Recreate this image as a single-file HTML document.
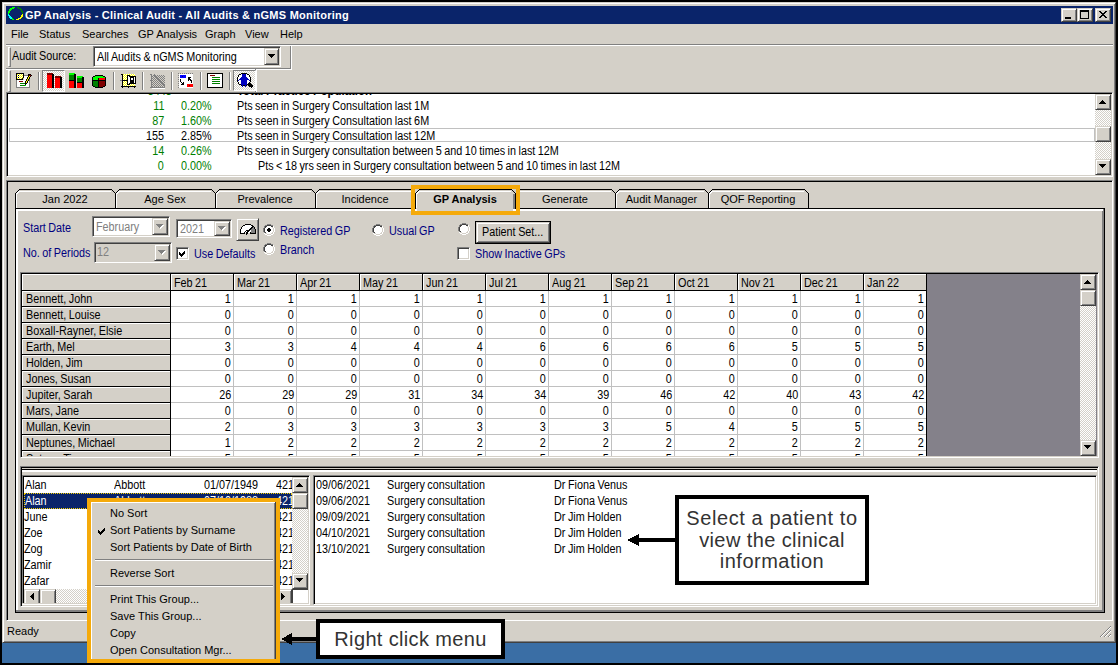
<!DOCTYPE html><html><head><meta charset="utf-8"><style>
html,body{margin:0;padding:0}
body{width:1118px;height:665px;background:#000;position:relative;overflow:hidden}
.a{position:absolute;box-sizing:border-box}
.t{position:absolute;font:12px/14px "Liberation Sans",sans-serif;white-space:pre;color:#000;word-spacing:-0.55px;transform:scaleX(0.9);transform-origin:0 0}
.r{transform-origin:100% 0}
.s{position:absolute;font:11px/13px "Liberation Sans",sans-serif;white-space:pre;color:#000}
.raised{border:1px solid;border-color:#d4d0c8 #404040 #404040 #d4d0c8;box-shadow:inset 1px 1px #fff,inset -1px -1px #808080;background:#d4d0c8}
.sunken{border:1px solid;border-color:#808080 #fff #fff #808080;box-shadow:inset 1px 1px #404040,inset -1px -1px #d4d0c8}
.sk{box-shadow:inset 1px 1px #000,inset -1px -1px #d4d0c8}
.navy{color:#000080}
.grn{color:#008000}
svg{shape-rendering:crispEdges;overflow:visible}
</style></head><body>
<div class="a" style="left:2px;top:643px;width:1114px;height:20px;background:#3a6ea5"></div>
<div class="a" style="left:2px;top:2px;width:1114px;height:641px;background:#d4d0c8;border:1px solid;border-color:#d4d0c8 #404040 #404040 #d4d0c8;box-shadow:inset 1px 1px #fff,inset -1px -1px #808080"></div>
<div class="a" style="left:6px;top:6px;width:1107px;height:18px;background:#0a246a"></div>
<svg class="a" style="left:8px;top:7px" width="16" height="14"><rect x="4" y="0" width="3" height="1" fill="#00ff00"/><rect x="9" y="0" width="2" height="1" fill="#008000"/><rect x="2" y="1" width="4" height="1" fill="#00ff00"/><rect x="10" y="1" width="3" height="1" fill="#008000"/><rect x="1" y="2" width="3" height="1" fill="#00ff00"/><rect x="12" y="2" width="2" height="1" fill="#008000"/><rect x="1" y="3" width="2" height="1" fill="#00ff00"/><rect x="13" y="3" width="1" height="1" fill="#008000"/><rect x="0" y="4" width="2" height="1" fill="#00ff00"/><rect x="13" y="4" width="2" height="1" fill="#008000"/><rect x="0" y="5" width="2" height="1" fill="#00ff00"/><rect x="14" y="5" width="1" height="1" fill="#008000"/><rect x="0" y="6" width="1" height="1" fill="#00ff00"/><rect x="14" y="6" width="1" height="1" fill="#008000"/><rect x="0" y="7" width="1" height="1" fill="#00ffff"/><rect x="14" y="7" width="1" height="1" fill="#ffff00"/><rect x="0" y="8" width="2" height="1" fill="#00ffff"/><rect x="13" y="8" width="2" height="1" fill="#ffff00"/><rect x="1" y="9" width="2" height="1" fill="#00ffff"/><rect x="13" y="9" width="2" height="1" fill="#ffff00"/><rect x="1" y="10" width="3" height="1" fill="#00ffff"/><rect x="12" y="10" width="2" height="1" fill="#ffff00"/><rect x="2" y="11" width="2" height="1" fill="#00ffff"/><rect x="4" y="11" width="1" height="1" fill="#00ff00"/><rect x="10" y="11" width="3" height="1" fill="#ffff00"/><rect x="4" y="12" width="2" height="1" fill="#00ff00"/><rect x="8" y="12" width="3" height="1" fill="#ffff00"/></svg>
<div class="s" style="left:25px;top:9px;color:#fff;font-weight:bold;letter-spacing:0.25px">GP Analysis - Clinical Audit - All Audits &amp; nGMS Monitoring</div>
<div class="a raised" style="left:1061px;top:8px;width:16px;height:14px;"></div>
<div class="a raised" style="left:1077px;top:8px;width:16px;height:14px;"></div>
<div class="a raised" style="left:1095px;top:8px;width:16px;height:14px;"></div>
<svg class="a" style="left:1061px;top:8px" width="16" height="14"><rect x="4" y="9" width="6" height="2" fill="#000"/></svg>
<svg class="a" style="left:1077px;top:8px" width="16" height="14"><path d="M3 2h9v9h-9z M4 4v6h7v-6z" fill="#000" fill-rule="evenodd"/></svg>
<svg class="a" style="left:1099px;top:11px" width="8" height="7"><rect x="0" y="0" width="2" height="1" fill="#000"/><rect x="6" y="0" width="2" height="1" fill="#000"/><rect x="1" y="1" width="2" height="1" fill="#000"/><rect x="5" y="1" width="2" height="1" fill="#000"/><rect x="2" y="2" width="4" height="1" fill="#000"/><rect x="3" y="3" width="2" height="1" fill="#000"/><rect x="2" y="4" width="4" height="1" fill="#000"/><rect x="1" y="5" width="2" height="1" fill="#000"/><rect x="5" y="5" width="2" height="1" fill="#000"/><rect x="0" y="6" width="2" height="1" fill="#000"/><rect x="6" y="6" width="2" height="1" fill="#000"/></svg>
<div class="s" style="left:11px;top:28px;">File</div>
<div class="s" style="left:39px;top:28px;">Status</div>
<div class="s" style="left:82px;top:28px;">Searches</div>
<div class="s" style="left:138px;top:28px;">GP Analysis</div>
<div class="s" style="left:205px;top:28px;">Graph</div>
<div class="s" style="left:245px;top:28px;">View</div>
<div class="s" style="left:280px;top:28px;">Help</div>
<div class="a" style="left:6px;top:44px;width:1107px;height:1px;background:#808080"></div>
<div class="a" style="left:6px;top:45px;width:1107px;height:1px;background:#fff"></div>
<div class="a" style="left:8px;top:47px;width:3px;height:20px;border:1px solid;border-color:#fff #808080 #808080 #fff"></div>
<div class="t" style="left:12px;top:49px;">Audit Source:</div>
<div class="a sunken " style="left:93px;top:46px;width:188px;height:21px;background:#fff;"></div>
<div class="t" style="left:97px;top:50px;">All Audits &amp; nGMS Monitoring</div>
<div class="a raised" style="left:264px;top:48px;width:15px;height:17px;"></div>
<svg class="a" style="left:268px;top:54px" width="7" height="4"><path d="M0 0H7V1H6V2H5V3H4V4H3V3H2V2H1V1H0Z" fill="#000"/></svg>
<div class="a" style="left:290px;top:46px;width:1px;height:23px;background:#808080"></div>
<div class="a" style="left:291px;top:46px;width:1px;height:24px;background:#fff"></div>
<div class="a" style="left:6px;top:68px;width:285px;height:1px;background:#808080"></div>
<div class="a" style="left:6px;top:69px;width:286px;height:1px;background:#fff"></div>
<div class="a" style="left:8px;top:70px;width:3px;height:22px;border:1px solid;border-color:#fff #808080 #808080 #fff"></div>
<div class="a" style="left:256px;top:69px;width:1px;height:23px;background:#fff"></div>
<div class="a" style="left:255px;top:69px;width:1px;height:23px;background:#808080"></div>
<div class="a" style="left:38px;top:72px;width:1px;height:18px;background:#808080"></div>
<div class="a" style="left:39px;top:72px;width:1px;height:18px;background:#fff"></div>
<div class="a" style="left:113px;top:72px;width:1px;height:18px;background:#808080"></div>
<div class="a" style="left:114px;top:72px;width:1px;height:18px;background:#fff"></div>
<div class="a" style="left:142px;top:72px;width:1px;height:18px;background:#808080"></div>
<div class="a" style="left:143px;top:72px;width:1px;height:18px;background:#fff"></div>
<div class="a" style="left:171px;top:72px;width:1px;height:18px;background:#808080"></div>
<div class="a" style="left:172px;top:72px;width:1px;height:18px;background:#fff"></div>
<div class="a" style="left:200px;top:72px;width:1px;height:18px;background:#808080"></div>
<div class="a" style="left:201px;top:72px;width:1px;height:18px;background:#fff"></div>
<div class="a" style="left:229px;top:72px;width:1px;height:18px;background:#808080"></div>
<div class="a" style="left:230px;top:72px;width:1px;height:18px;background:#fff"></div>
<div class="a" style="left:42px;top:70px;width:23px;height:22px;border:1px solid;border-color:#808080 #fff #fff #808080;background:repeating-conic-gradient(#d4d0c8 0 25%,#fff 0 50%) 0 0/2px 2px"></div>
<div class="a" style="left:233px;top:70px;width:23px;height:21px;border:1px solid;border-color:#808080 #fff #fff #808080;background:repeating-conic-gradient(#d4d0c8 0 25%,#fff 0 50%) 0 0/2px 2px"></div>
<svg class="a" style="left:15px;top:72px" width="18" height="17"><rect x="1" y="1" width="8" height="1" fill="#000"/><rect x="1" y="2" width="1" height="1" fill="#000"/><rect x="2" y="2" width="1" height="1" fill="#ffff00"/><rect x="3" y="2" width="1" height="1" fill="#fff"/><rect x="4" y="2" width="1" height="1" fill="#ffff00"/><rect x="5" y="2" width="1" height="1" fill="#fff"/><rect x="6" y="2" width="1" height="1" fill="#ffff00"/><rect x="7" y="2" width="1" height="1" fill="#fff"/><rect x="8" y="2" width="1" height="1" fill="#000"/><rect x="13" y="2" width="3" height="1" fill="#000"/><rect x="1" y="3" width="1" height="1" fill="#000"/><rect x="2" y="3" width="1" height="1" fill="#fff"/><rect x="3" y="3" width="1" height="1" fill="#000"/><rect x="4" y="3" width="1" height="1" fill="#fff"/><rect x="5" y="3" width="1" height="1" fill="#ffff00"/><rect x="6" y="3" width="1" height="1" fill="#fff"/><rect x="7" y="3" width="1" height="1" fill="#ffff00"/><rect x="8" y="3" width="1" height="1" fill="#000"/><rect x="9" y="3" width="4" height="1" fill="#808080"/><rect x="13" y="3" width="1" height="1" fill="#000"/><rect x="14" y="3" width="2" height="1" fill="#800000"/><rect x="16" y="3" width="1" height="1" fill="#000"/><rect x="1" y="4" width="1" height="1" fill="#000"/><rect x="2" y="4" width="1" height="1" fill="#ffff00"/><rect x="3" y="4" width="1" height="1" fill="#fff"/><rect x="4" y="4" width="1" height="1" fill="#ffff00"/><rect x="5" y="4" width="1" height="1" fill="#fff"/><rect x="6" y="4" width="1" height="1" fill="#ffff00"/><rect x="7" y="4" width="1" height="1" fill="#fff"/><rect x="8" y="4" width="1" height="1" fill="#000"/><rect x="9" y="4" width="4" height="1" fill="#fff"/><rect x="13" y="4" width="1" height="1" fill="#000"/><rect x="14" y="4" width="1" height="1" fill="#ffff00"/><rect x="15" y="4" width="1" height="1" fill="#000"/><rect x="1" y="5" width="1" height="1" fill="#000"/><rect x="2" y="5" width="1" height="1" fill="#fff"/><rect x="3" y="5" width="1" height="1" fill="#000"/><rect x="4" y="5" width="1" height="1" fill="#fff"/><rect x="5" y="5" width="1" height="1" fill="#ffff00"/><rect x="6" y="5" width="1" height="1" fill="#fff"/><rect x="7" y="5" width="1" height="1" fill="#ffff00"/><rect x="8" y="5" width="1" height="1" fill="#000"/><rect x="9" y="5" width="3" height="1" fill="#fff"/><rect x="12" y="5" width="1" height="1" fill="#000"/><rect x="13" y="5" width="1" height="1" fill="#ffff00"/><rect x="14" y="5" width="1" height="1" fill="#000"/><rect x="1" y="6" width="1" height="1" fill="#000"/><rect x="2" y="6" width="1" height="1" fill="#ffff00"/><rect x="3" y="6" width="1" height="1" fill="#fff"/><rect x="4" y="6" width="1" height="1" fill="#ffff00"/><rect x="5" y="6" width="1" height="1" fill="#fff"/><rect x="6" y="6" width="1" height="1" fill="#ffff00"/><rect x="7" y="6" width="1" height="1" fill="#000"/><rect x="9" y="6" width="3" height="1" fill="#fff"/><rect x="12" y="6" width="1" height="1" fill="#000"/><rect x="13" y="6" width="1" height="1" fill="#ffff00"/><rect x="14" y="6" width="1" height="1" fill="#000"/><rect x="1" y="7" width="7" height="1" fill="#000"/><rect x="9" y="7" width="2" height="1" fill="#fff"/><rect x="11" y="7" width="1" height="1" fill="#000"/><rect x="12" y="7" width="1" height="1" fill="#ffff00"/><rect x="13" y="7" width="1" height="1" fill="#000"/><rect x="14" y="7" width="1" height="1" fill="#808080"/><rect x="1" y="8" width="1" height="1" fill="#808080"/><rect x="2" y="8" width="9" height="1" fill="#fff"/><rect x="11" y="8" width="1" height="1" fill="#000"/><rect x="12" y="8" width="1" height="1" fill="#ffff00"/><rect x="13" y="8" width="1" height="1" fill="#000"/><rect x="14" y="8" width="1" height="1" fill="#808080"/><rect x="1" y="9" width="1" height="1" fill="#808080"/><rect x="2" y="9" width="2" height="1" fill="#fff"/><rect x="4" y="9" width="4" height="1" fill="#800000"/><rect x="8" y="9" width="2" height="1" fill="#fff"/><rect x="10" y="9" width="1" height="1" fill="#000"/><rect x="11" y="9" width="1" height="1" fill="#ffff00"/><rect x="12" y="9" width="1" height="1" fill="#000"/><rect x="13" y="9" width="1" height="1" fill="#fff"/><rect x="14" y="9" width="1" height="1" fill="#808080"/><rect x="1" y="10" width="1" height="1" fill="#808080"/><rect x="2" y="10" width="8" height="1" fill="#fff"/><rect x="10" y="10" width="1" height="1" fill="#000"/><rect x="11" y="10" width="1" height="1" fill="#ffff00"/><rect x="12" y="10" width="1" height="1" fill="#000"/><rect x="13" y="10" width="1" height="1" fill="#fff"/><rect x="14" y="10" width="1" height="1" fill="#808080"/><rect x="1" y="11" width="1" height="1" fill="#808080"/><rect x="2" y="11" width="3" height="1" fill="#fff"/><rect x="5" y="11" width="5" height="1" fill="#008000"/><rect x="10" y="11" width="2" height="1" fill="#000"/><rect x="12" y="11" width="2" height="1" fill="#fff"/><rect x="14" y="11" width="1" height="1" fill="#808080"/><rect x="1" y="12" width="1" height="1" fill="#808080"/><rect x="2" y="12" width="8" height="1" fill="#fff"/><rect x="10" y="12" width="1" height="1" fill="#000"/><rect x="11" y="12" width="3" height="1" fill="#fff"/><rect x="14" y="12" width="1" height="1" fill="#808080"/><rect x="1" y="13" width="1" height="1" fill="#808080"/><rect x="2" y="13" width="3" height="1" fill="#fff"/><rect x="5" y="13" width="5" height="1" fill="#008000"/><rect x="10" y="13" width="1" height="1" fill="#00ff00"/><rect x="11" y="13" width="3" height="1" fill="#fff"/><rect x="14" y="13" width="1" height="1" fill="#808080"/><rect x="1" y="14" width="1" height="1" fill="#808080"/><rect x="2" y="14" width="12" height="1" fill="#fff"/><rect x="14" y="14" width="1" height="1" fill="#808080"/><rect x="1" y="15" width="14" height="1" fill="#808080"/></svg>
<svg class="a" style="left:47px;top:73px" width="16" height="16"><rect x="0" y="0" width="6" height="2" fill="#800000"/><rect x="0" y="2" width="5" height="13" fill="#f00"/><rect x="5" y="1" width="2" height="14" fill="#000"/><rect x="8" y="3" width="6" height="2" fill="#800000"/><rect x="8" y="5" width="5" height="10" fill="#f00"/><rect x="13" y="4" width="2" height="11" fill="#000"/></svg>
<svg class="a" style="left:69px;top:73px" width="16" height="16"><rect x="0" y="0" width="6" height="2" fill="#0f0"/><rect x="0" y="2" width="5" height="5" fill="#008000"/><rect x="0" y="7" width="5" height="1" fill="#000"/><rect x="0" y="8" width="5" height="7" fill="#f00"/><rect x="5" y="1" width="2" height="14" fill="#000"/><rect x="8" y="3" width="6" height="2" fill="#0f0"/><rect x="8" y="5" width="5" height="4" fill="#008000"/><rect x="8" y="9" width="5" height="1" fill="#000"/><rect x="8" y="10" width="5" height="5" fill="#f00"/><rect x="13" y="4" width="2" height="11" fill="#000"/></svg>
<svg class="a" style="left:92px;top:75px" width="15" height="13"><path d="M3 0h8v1h2v1h1v9h-1v1h-2v1h-8v-1h-2v-1h-1v-9h1v-1h2z" fill="#000"/><rect x="3" y="1" width="8" height="1" fill="#0f0"/><rect x="1" y="2" width="12" height="1" fill="#0f0"/><rect x="1" y="3" width="5" height="2" fill="#0f0"/><rect x="7" y="3" width="6" height="2" fill="#f00"/><rect x="6" y="4" width="1" height="1" fill="#000"/><rect x="1" y="5" width="5" height="1" fill="#000"/><rect x="1" y="6" width="5" height="5" fill="#008000"/><rect x="7" y="6" width="6" height="5" fill="#800000"/><rect x="6" y="5" width="1" height="7" fill="#000"/><rect x="7" y="5" width="6" height="1" fill="#000"/><rect x="3" y="11" width="3" height="1" fill="#008000"/><rect x="7" y="11" width="4" height="1" fill="#800000"/></svg>
<svg class="a" style="left:119px;top:72px" width="17" height="16"><rect x="2" y="2" width="2" height="1" fill="#000"/><rect x="4" y="2" width="1" height="1" fill="#ffff00"/><rect x="5" y="2" width="1" height="1" fill="#fff"/><rect x="6" y="2" width="1" height="1" fill="#ffff00"/><rect x="7" y="2" width="1" height="1" fill="#fff"/><rect x="8" y="2" width="1" height="1" fill="#ffff00"/><rect x="9" y="2" width="1" height="1" fill="#fff"/><rect x="10" y="2" width="1" height="1" fill="#ffff00"/><rect x="11" y="2" width="1" height="1" fill="#fff"/><rect x="12" y="2" width="1" height="1" fill="#ffff00"/><rect x="13" y="2" width="1" height="1" fill="#fff"/><rect x="14" y="2" width="1" height="1" fill="#ffff00"/><rect x="15" y="2" width="1" height="1" fill="#fff"/><rect x="3" y="3" width="1" height="1" fill="#000"/><rect x="4" y="3" width="1" height="1" fill="#fff"/><rect x="5" y="3" width="1" height="1" fill="#ffff00"/><rect x="6" y="3" width="1" height="1" fill="#fff"/><rect x="7" y="3" width="1" height="1" fill="#ffff00"/><rect x="8" y="3" width="3" height="1" fill="#000"/><rect x="11" y="3" width="1" height="1" fill="#ffff00"/><rect x="12" y="3" width="1" height="1" fill="#fff"/><rect x="13" y="3" width="1" height="1" fill="#ffff00"/><rect x="14" y="3" width="1" height="1" fill="#fff"/><rect x="15" y="3" width="1" height="1" fill="#ffff00"/><rect x="3" y="4" width="1" height="1" fill="#000"/><rect x="4" y="4" width="1" height="1" fill="#ffff00"/><rect x="5" y="4" width="1" height="1" fill="#fff"/><rect x="6" y="4" width="1" height="1" fill="#ffff00"/><rect x="7" y="4" width="1" height="1" fill="#fff"/><rect x="8" y="4" width="1" height="1" fill="#000"/><rect x="9" y="4" width="1" height="1" fill="#fff"/><rect x="10" y="4" width="7" height="1" fill="#000"/><rect x="3" y="5" width="1" height="1" fill="#000"/><rect x="4" y="5" width="1" height="1" fill="#fff"/><rect x="5" y="5" width="1" height="1" fill="#ffff00"/><rect x="6" y="5" width="1" height="1" fill="#fff"/><rect x="7" y="5" width="1" height="1" fill="#ffff00"/><rect x="8" y="5" width="1" height="1" fill="#000"/><rect x="9" y="5" width="2" height="1" fill="#fff"/><rect x="11" y="5" width="4" height="1" fill="#000"/><rect x="15" y="5" width="1" height="1" fill="#fff"/><rect x="16" y="5" width="1" height="1" fill="#000"/><rect x="3" y="6" width="1" height="1" fill="#000"/><rect x="4" y="6" width="1" height="1" fill="#ffff00"/><rect x="5" y="6" width="1" height="1" fill="#fff"/><rect x="6" y="6" width="1" height="1" fill="#ffff00"/><rect x="7" y="6" width="1" height="1" fill="#fff"/><rect x="8" y="6" width="1" height="1" fill="#000"/><rect x="9" y="6" width="2" height="1" fill="#fff"/><rect x="11" y="6" width="1" height="1" fill="#000"/><rect x="12" y="6" width="2" height="1" fill="#fff"/><rect x="14" y="6" width="1" height="1" fill="#000"/><rect x="15" y="6" width="1" height="1" fill="#fff"/><rect x="16" y="6" width="1" height="1" fill="#000"/><rect x="3" y="7" width="1" height="1" fill="#000"/><rect x="4" y="7" width="1" height="1" fill="#fff"/><rect x="5" y="7" width="1" height="1" fill="#ffff00"/><rect x="6" y="7" width="1" height="1" fill="#fff"/><rect x="7" y="7" width="1" height="1" fill="#ffff00"/><rect x="8" y="7" width="1" height="1" fill="#000"/><rect x="9" y="7" width="2" height="1" fill="#fff"/><rect x="11" y="7" width="1" height="1" fill="#000"/><rect x="12" y="7" width="2" height="1" fill="#fff"/><rect x="14" y="7" width="1" height="1" fill="#000"/><rect x="15" y="7" width="1" height="1" fill="#fff"/><rect x="16" y="7" width="1" height="1" fill="#000"/><rect x="1" y="8" width="2" height="1" fill="#808080"/><rect x="3" y="8" width="6" height="1" fill="#000"/><rect x="9" y="8" width="2" height="1" fill="#fff"/><rect x="11" y="8" width="4" height="1" fill="#000"/><rect x="15" y="8" width="1" height="1" fill="#fff"/><rect x="16" y="8" width="1" height="1" fill="#000"/><rect x="3" y="9" width="1" height="1" fill="#000"/><rect x="4" y="9" width="1" height="1" fill="#fff"/><rect x="5" y="9" width="1" height="1" fill="#ffff00"/><rect x="6" y="9" width="1" height="1" fill="#fff"/><rect x="7" y="9" width="1" height="1" fill="#ffff00"/><rect x="8" y="9" width="1" height="1" fill="#000"/><rect x="9" y="9" width="2" height="1" fill="#fff"/><rect x="11" y="9" width="4" height="1" fill="#000"/><rect x="15" y="9" width="1" height="1" fill="#fff"/><rect x="16" y="9" width="1" height="1" fill="#000"/><rect x="3" y="10" width="1" height="1" fill="#000"/><rect x="4" y="10" width="1" height="1" fill="#ffff00"/><rect x="5" y="10" width="1" height="1" fill="#fff"/><rect x="6" y="10" width="1" height="1" fill="#ffff00"/><rect x="7" y="10" width="1" height="1" fill="#fff"/><rect x="8" y="10" width="1" height="1" fill="#000"/><rect x="9" y="10" width="2" height="1" fill="#fff"/><rect x="11" y="10" width="4" height="1" fill="#000"/><rect x="15" y="10" width="1" height="1" fill="#fff"/><rect x="16" y="10" width="1" height="1" fill="#000"/><rect x="3" y="11" width="1" height="1" fill="#000"/><rect x="4" y="11" width="1" height="1" fill="#fff"/><rect x="5" y="11" width="1" height="1" fill="#ffff00"/><rect x="6" y="11" width="1" height="1" fill="#fff"/><rect x="7" y="11" width="1" height="1" fill="#ffff00"/><rect x="8" y="11" width="1" height="1" fill="#000"/><rect x="9" y="11" width="1" height="1" fill="#fff"/><rect x="10" y="11" width="7" height="1" fill="#000"/><rect x="3" y="12" width="1" height="1" fill="#000"/><rect x="4" y="12" width="1" height="1" fill="#ffff00"/><rect x="5" y="12" width="1" height="1" fill="#fff"/><rect x="6" y="12" width="1" height="1" fill="#ffff00"/><rect x="7" y="12" width="1" height="1" fill="#fff"/><rect x="8" y="12" width="3" height="1" fill="#000"/><rect x="11" y="12" width="1" height="1" fill="#fff"/><rect x="12" y="12" width="1" height="1" fill="#ffff00"/><rect x="13" y="12" width="1" height="1" fill="#fff"/><rect x="14" y="12" width="1" height="1" fill="#ffff00"/><rect x="15" y="12" width="1" height="1" fill="#fff"/><rect x="3" y="13" width="1" height="1" fill="#000"/><rect x="4" y="13" width="1" height="1" fill="#fff"/><rect x="5" y="13" width="1" height="1" fill="#ffff00"/><rect x="6" y="13" width="1" height="1" fill="#fff"/><rect x="7" y="13" width="1" height="1" fill="#ffff00"/><rect x="8" y="13" width="1" height="1" fill="#fff"/><rect x="9" y="13" width="1" height="1" fill="#ffff00"/><rect x="10" y="13" width="1" height="1" fill="#fff"/><rect x="11" y="13" width="1" height="1" fill="#ffff00"/><rect x="12" y="13" width="1" height="1" fill="#fff"/><rect x="13" y="13" width="1" height="1" fill="#ffff00"/><rect x="14" y="13" width="1" height="1" fill="#fff"/><rect x="15" y="13" width="1" height="1" fill="#ffff00"/><rect x="2" y="14" width="15" height="1" fill="#000"/><rect x="3" y="15" width="1" height="1" fill="#000"/><rect x="9" y="15" width="1" height="1" fill="#000"/><rect x="15" y="15" width="1" height="1" fill="#000"/></svg>
<svg class="a" style="left:150px;top:74px" width="16" height="16"><rect x="1" y="0" width="1" height="14" fill="#808080"/><rect x="0" y="13" width="15" height="1" fill="#808080"/><rect x="0" y="0" width="2" height="1" fill="#808080"/><rect x="0" y="6" width="2" height="1" fill="#808080"/><rect x="3" y="1" width="1" height="1" fill="#808080"/><rect x="5" y="1" width="1" height="1" fill="#808080"/><rect x="7" y="1" width="1" height="1" fill="#808080"/><rect x="9" y="1" width="1" height="1" fill="#808080"/><rect x="11" y="1" width="1" height="1" fill="#808080"/><rect x="13" y="1" width="1" height="1" fill="#808080"/><rect x="2" y="2" width="1" height="1" fill="#808080"/><rect x="4" y="2" width="1" height="1" fill="#808080"/><rect x="6" y="2" width="1" height="1" fill="#808080"/><rect x="8" y="2" width="1" height="1" fill="#808080"/><rect x="10" y="2" width="1" height="1" fill="#808080"/><rect x="12" y="2" width="1" height="1" fill="#808080"/><rect x="14" y="2" width="1" height="1" fill="#808080"/><rect x="3" y="3" width="1" height="1" fill="#808080"/><rect x="5" y="3" width="1" height="1" fill="#808080"/><rect x="7" y="3" width="1" height="1" fill="#808080"/><rect x="9" y="3" width="1" height="1" fill="#808080"/><rect x="11" y="3" width="1" height="1" fill="#808080"/><rect x="13" y="3" width="1" height="1" fill="#808080"/><rect x="2" y="4" width="1" height="1" fill="#808080"/><rect x="4" y="4" width="1" height="1" fill="#808080"/><rect x="6" y="4" width="1" height="1" fill="#808080"/><rect x="8" y="4" width="1" height="1" fill="#808080"/><rect x="10" y="4" width="1" height="1" fill="#808080"/><rect x="12" y="4" width="1" height="1" fill="#808080"/><rect x="14" y="4" width="1" height="1" fill="#808080"/><rect x="3" y="5" width="1" height="1" fill="#808080"/><rect x="5" y="5" width="1" height="1" fill="#808080"/><rect x="7" y="5" width="1" height="1" fill="#808080"/><rect x="9" y="5" width="1" height="1" fill="#808080"/><rect x="11" y="5" width="1" height="1" fill="#808080"/><rect x="13" y="5" width="1" height="1" fill="#808080"/><rect x="2" y="6" width="1" height="1" fill="#808080"/><rect x="4" y="6" width="1" height="1" fill="#808080"/><rect x="6" y="6" width="1" height="1" fill="#808080"/><rect x="8" y="6" width="1" height="1" fill="#808080"/><rect x="10" y="6" width="1" height="1" fill="#808080"/><rect x="12" y="6" width="1" height="1" fill="#808080"/><rect x="14" y="6" width="1" height="1" fill="#808080"/><rect x="3" y="7" width="1" height="1" fill="#808080"/><rect x="5" y="7" width="1" height="1" fill="#808080"/><rect x="7" y="7" width="1" height="1" fill="#808080"/><rect x="9" y="7" width="1" height="1" fill="#808080"/><rect x="11" y="7" width="1" height="1" fill="#808080"/><rect x="13" y="7" width="1" height="1" fill="#808080"/><rect x="2" y="8" width="1" height="1" fill="#808080"/><rect x="4" y="8" width="1" height="1" fill="#808080"/><rect x="6" y="8" width="1" height="1" fill="#808080"/><rect x="8" y="8" width="1" height="1" fill="#808080"/><rect x="10" y="8" width="1" height="1" fill="#808080"/><rect x="12" y="8" width="1" height="1" fill="#808080"/><rect x="14" y="8" width="1" height="1" fill="#808080"/><rect x="3" y="9" width="1" height="1" fill="#808080"/><rect x="5" y="9" width="1" height="1" fill="#808080"/><rect x="7" y="9" width="1" height="1" fill="#808080"/><rect x="9" y="9" width="1" height="1" fill="#808080"/><rect x="11" y="9" width="1" height="1" fill="#808080"/><rect x="13" y="9" width="1" height="1" fill="#808080"/><rect x="2" y="10" width="1" height="1" fill="#808080"/><rect x="4" y="10" width="1" height="1" fill="#808080"/><rect x="6" y="10" width="1" height="1" fill="#808080"/><rect x="8" y="10" width="1" height="1" fill="#808080"/><rect x="10" y="10" width="1" height="1" fill="#808080"/><rect x="12" y="10" width="1" height="1" fill="#808080"/><rect x="14" y="10" width="1" height="1" fill="#808080"/><rect x="3" y="11" width="1" height="1" fill="#808080"/><rect x="5" y="11" width="1" height="1" fill="#808080"/><rect x="7" y="11" width="1" height="1" fill="#808080"/><rect x="9" y="11" width="1" height="1" fill="#808080"/><rect x="11" y="11" width="1" height="1" fill="#808080"/><rect x="13" y="11" width="1" height="1" fill="#808080"/><rect x="2" y="12" width="1" height="1" fill="#808080"/><rect x="4" y="12" width="1" height="1" fill="#808080"/><rect x="6" y="12" width="1" height="1" fill="#808080"/><rect x="8" y="12" width="1" height="1" fill="#808080"/><rect x="10" y="12" width="1" height="1" fill="#808080"/><rect x="12" y="12" width="1" height="1" fill="#808080"/><rect x="14" y="12" width="1" height="1" fill="#808080"/><path d="M4 1l11 11" stroke="#808080" stroke-width="1.5"/><rect x="2" y="14" width="13" height="1" fill="#fff"/></svg>
<svg class="a" style="left:178px;top:73px" width="16" height="16"><rect x="0" y="0" width="1" height="1" fill="#808080"/><rect x="0" y="0" width="1" height="1" fill="#808080"/><rect x="2" y="0" width="1" height="1" fill="#808080"/><rect x="0" y="2" width="1" height="1" fill="#808080"/><rect x="4" y="0" width="1" height="1" fill="#808080"/><rect x="0" y="4" width="1" height="1" fill="#808080"/><rect x="6" y="0" width="1" height="1" fill="#808080"/><rect x="0" y="6" width="1" height="1" fill="#808080"/><rect x="8" y="0" width="1" height="1" fill="#808080"/><rect x="0" y="8" width="1" height="1" fill="#808080"/><rect x="10" y="0" width="1" height="1" fill="#808080"/><rect x="0" y="10" width="1" height="1" fill="#808080"/><rect x="12" y="0" width="1" height="1" fill="#808080"/><rect x="0" y="12" width="1" height="1" fill="#808080"/><rect x="14" y="0" width="1" height="1" fill="#808080"/><rect x="0" y="14" width="1" height="1" fill="#808080"/><rect x="1" y="1" width="14" height="14" fill="#fff"/><rect x="2" y="2" width="6" height="3" fill="#0000ff"/><rect x="9" y="11" width="6" height="3" fill="#f00"/><rect x="4" y="3" width="1" height="1" fill="#000080"/><rect x="11" y="12" width="1" height="1" fill="#800000"/><path d="M2 6h1v3h1v1h1v-1h1v3h-3v-1h1v-1h-1v-1h-1z" fill="#000"/><path d="M10 4h3v1h-1v1h1v1h1v3h-1v-2h-1v-1h-1v1h-1z" fill="#000"/></svg>
<svg class="a" style="left:207px;top:73px" width="16" height="16"><rect x="0" y="0" width="16" height="15" fill="#000"/><rect x="1" y="1" width="14" height="13" fill="#fff"/><rect x="3" y="2" width="5" height="1" fill="#800000"/><rect x="5" y="4" width="8" height="1" fill="#008000"/><rect x="5" y="6" width="8" height="1" fill="#008000"/><rect x="5" y="8" width="8" height="1" fill="#008000"/><rect x="5" y="10" width="8" height="1" fill="#008000"/></svg>
<svg class="a" style="left:234px;top:71px" width="20" height="17"><rect x="7" y="2" width="6" height="1" fill="#000"/><rect x="5" y="3" width="2" height="1" fill="#000"/><rect x="7" y="3" width="1" height="1" fill="#fff"/><rect x="8" y="3" width="4" height="1" fill="#0000c0"/><rect x="12" y="3" width="1" height="1" fill="#fff"/><rect x="13" y="3" width="2" height="1" fill="#000"/><rect x="4" y="4" width="1" height="1" fill="#000"/><rect x="5" y="4" width="3" height="1" fill="#fff"/><rect x="8" y="4" width="4" height="1" fill="#0000c0"/><rect x="12" y="4" width="3" height="1" fill="#fff"/><rect x="15" y="4" width="1" height="1" fill="#000"/><rect x="4" y="5" width="1" height="1" fill="#000"/><rect x="5" y="5" width="3" height="1" fill="#fff"/><rect x="8" y="5" width="4" height="1" fill="#0000c0"/><rect x="12" y="5" width="3" height="1" fill="#fff"/><rect x="15" y="5" width="1" height="1" fill="#000"/><rect x="3" y="6" width="1" height="1" fill="#000"/><rect x="4" y="6" width="3" height="1" fill="#fff"/><rect x="7" y="6" width="6" height="1" fill="#0000c0"/><rect x="13" y="6" width="3" height="1" fill="#fff"/><rect x="16" y="6" width="1" height="1" fill="#000"/><rect x="3" y="7" width="1" height="1" fill="#000"/><rect x="4" y="7" width="2" height="1" fill="#fff"/><rect x="6" y="7" width="8" height="1" fill="#0000c0"/><rect x="14" y="7" width="2" height="1" fill="#fff"/><rect x="16" y="7" width="1" height="1" fill="#000"/><rect x="3" y="8" width="1" height="1" fill="#000"/><rect x="4" y="8" width="1" height="1" fill="#fff"/><rect x="5" y="8" width="10" height="1" fill="#0000c0"/><rect x="15" y="8" width="1" height="1" fill="#fff"/><rect x="16" y="8" width="1" height="1" fill="#000"/><rect x="3" y="9" width="1" height="1" fill="#000"/><rect x="4" y="9" width="1" height="1" fill="#0000c0"/><rect x="5" y="9" width="2" height="1" fill="#fff"/><rect x="7" y="9" width="6" height="1" fill="#0000c0"/><rect x="13" y="9" width="2" height="1" fill="#fff"/><rect x="15" y="9" width="1" height="1" fill="#0000c0"/><rect x="16" y="9" width="1" height="1" fill="#000"/><rect x="3" y="10" width="1" height="1" fill="#000"/><rect x="4" y="10" width="3" height="1" fill="#fff"/><rect x="7" y="10" width="6" height="1" fill="#0000c0"/><rect x="13" y="10" width="3" height="1" fill="#fff"/><rect x="16" y="10" width="1" height="1" fill="#000"/><rect x="4" y="11" width="1" height="1" fill="#000"/><rect x="5" y="11" width="2" height="1" fill="#fff"/><rect x="7" y="11" width="6" height="1" fill="#0000c0"/><rect x="13" y="11" width="2" height="1" fill="#fff"/><rect x="15" y="11" width="1" height="1" fill="#000"/><rect x="4" y="12" width="1" height="1" fill="#000"/><rect x="5" y="12" width="2" height="1" fill="#fff"/><rect x="7" y="12" width="6" height="1" fill="#0000c0"/><rect x="13" y="12" width="1" height="1" fill="#fff"/><rect x="14" y="12" width="3" height="1" fill="#000"/><rect x="5" y="13" width="2" height="1" fill="#000"/><rect x="7" y="13" width="6" height="1" fill="#0000c0"/><rect x="13" y="13" width="5" height="1" fill="#000"/><rect x="7" y="14" width="1" height="1" fill="#000"/><rect x="8" y="14" width="1" height="1" fill="#0000c0"/><rect x="9" y="14" width="2" height="1" fill="#000"/><rect x="11" y="14" width="1" height="1" fill="#0000c0"/><rect x="12" y="14" width="1" height="1" fill="#000"/><rect x="14" y="14" width="5" height="1" fill="#000"/><rect x="8" y="15" width="1" height="1" fill="#0000c0"/><rect x="11" y="15" width="1" height="1" fill="#0000c0"/><rect x="15" y="15" width="4" height="1" fill="#000"/><rect x="17" y="16" width="1" height="1" fill="#000"/></svg>
<div class="a sunken sk" style="left:6px;top:92px;width:1107px;height:85px;background:#fff;"></div>
<div class="a" style="left:8px;top:94px;width:1087px;height:81px;overflow:hidden">
<div class="t r" style="right:923px;top:-10px;color:#008000">5443</div>
<div class="t" style="left:229px;top:-10px;font-weight:bold;transform:scaleX(0.95);">Total Practice Population</div>
<div class="t r" style="right:931px;top:5px;color:#008000">11</div>
<div class="t" style="left:173px;top:5px;color:#008000">0.20%</div>
<div class="t" style="left:229px;top:5px;">Pts seen in Surgery Consultation last 1M</div>
<div class="t r" style="right:931px;top:20px;color:#008000">87</div>
<div class="t" style="left:173px;top:20px;color:#008000">1.60%</div>
<div class="t" style="left:229px;top:20px;">Pts seen in Surgery Consultation last 6M</div>
<div class="t r" style="right:931px;top:35px;color:#000">155</div>
<div class="t" style="left:173px;top:35px;color:#000">2.85%</div>
<div class="t" style="left:229px;top:35px;">Pts seen in Surgery Consultation last 12M</div>
<div class="t r" style="right:931px;top:50px;color:#008000">14</div>
<div class="t" style="left:173px;top:50px;color:#008000">0.26%</div>
<div class="t" style="left:229px;top:50px;">Pts seen in Surgery consultation between 5 and 10 times in last 12M</div>
<div class="t r" style="right:931px;top:65px;color:#008000">0</div>
<div class="t" style="left:173px;top:65px;color:#008000">0.00%</div>
<div class="t" style="left:250px;top:65px;">Pts &lt; 18 yrs seen in Surgery consultation between 5 and 10 times in last 12M</div>
<div class="a" style="left:1px;top:34px;width:1086px;height:14px;border:1px solid #c0c0c0"></div>
</div>
<div class="a" style="left:1095px;top:94px;width:16px;height:81px;background:repeating-conic-gradient(#d4d0c8 0 25%,#fff 0 50%) 0 0/2px 2px"></div>
<div class="a raised" style="left:1095px;top:94px;width:16px;height:16px;"></div>
<svg class="a" style="left:1099px;top:100px" width="7" height="4"><path d="M3 0H4V1H5V2H6V3H7V4H0V3H1V2H2V1H3Z" fill="#000"/></svg>
<div class="a raised" style="left:1095px;top:159px;width:16px;height:16px;"></div>
<svg class="a" style="left:1099px;top:164px" width="7" height="4"><path d="M0 0H7V1H6V2H5V3H4V4H3V3H2V2H1V1H0Z" fill="#000"/></svg>
<div class="a raised" style="left:1095px;top:126px;width:16px;height:16px;"></div>
<div class="a sunken sk" style="left:6px;top:180px;width:1107px;height:441px;background:#d4d0c8;"></div>
<div class="a" style="left:15px;top:208px;width:1090px;height:405px;border:1px solid #000;box-shadow:inset -2px -2px #808080,inset 2px 2px #fff;background:#d4d0c8"></div>
<svg class="a" style="left:0;top:0" width="1118" height="230"><path d="M15.5 208.5V193.5L19.5 189.5H111.5L115.5 193.5V208.5" fill="#d4d0c8" stroke="#000" stroke-width="1"/><path d="M16.5 208V194L19.5 191H111" fill="none" stroke="#fff" stroke-width="1"/><path d="M115.5 208.5V193.5L119.5 189.5H211.5L215.5 193.5V208.5" fill="#d4d0c8" stroke="#000" stroke-width="1"/><path d="M116.5 208V194L119.5 191H211" fill="none" stroke="#fff" stroke-width="1"/><path d="M215.5 208.5V193.5L219.5 189.5H311.5L315.5 193.5V208.5" fill="#d4d0c8" stroke="#000" stroke-width="1"/><path d="M216.5 208V194L219.5 191H311" fill="none" stroke="#fff" stroke-width="1"/><path d="M315.5 208.5V193.5L319.5 189.5H411.5L415.5 193.5V208.5" fill="#d4d0c8" stroke="#000" stroke-width="1"/><path d="M316.5 208V194L319.5 191H411" fill="none" stroke="#fff" stroke-width="1"/><path d="M415.5 208.5V193.5L419.5 189.5H511.5L515.5 193.5V208.5" fill="#d4d0c8" stroke="#000" stroke-width="1"/><path d="M416.5 208V194L419.5 191H511" fill="none" stroke="#fff" stroke-width="1"/><path d="M514 194V210" fill="none" stroke="#808080" stroke-width="2"/><path d="M515.5 208.5V193.5L519.5 189.5H611.5L615.5 193.5V208.5" fill="#d4d0c8" stroke="#000" stroke-width="1"/><path d="M516.5 208V194L519.5 191H611" fill="none" stroke="#fff" stroke-width="1"/><path d="M615.5 208.5V193.5L619.5 189.5H704.5L708.5 193.5V208.5" fill="#d4d0c8" stroke="#000" stroke-width="1"/><path d="M616.5 208V194L619.5 191H704" fill="none" stroke="#fff" stroke-width="1"/><path d="M708.5 208.5V193.5L712.5 189.5H804.5L808.5 193.5V208.5" fill="#d4d0c8" stroke="#000" stroke-width="1"/><path d="M709.5 208V194L712.5 191H804" fill="none" stroke="#fff" stroke-width="1"/></svg>
<div class="a" style="left:15px;top:208px;width:401px;height:1px;background:#000"></div>
<div class="a" style="left:16px;top:209px;width:400px;height:2px;background:#fff"></div>
<div class="a" style="left:515px;top:208px;width:590px;height:1px;background:#000"></div>
<div class="a" style="left:513px;top:209px;width:590px;height:2px;background:#fff"></div>
<div class="a" style="left:417px;top:207px;width:96px;height:4px;background:#d4d0c8"></div>
<div class="s" style="left:15px;width:100px;text-align:center;top:193px;">Jan 2022</div>
<div class="s" style="left:115px;width:100px;text-align:center;top:193px;">Age Sex</div>
<div class="s" style="left:215px;width:100px;text-align:center;top:193px;">Prevalence</div>
<div class="s" style="left:315px;width:100px;text-align:center;top:193px;">Incidence</div>
<div class="s" style="left:415px;width:100px;text-align:center;top:193px;font-weight:bold;">GP Analysis</div>
<div class="s" style="left:515px;width:100px;text-align:center;top:193px;">Generate</div>
<div class="s" style="left:615px;width:93px;text-align:center;top:193px;">Audit Manager</div>
<div class="s" style="left:708px;width:100px;text-align:center;top:193px;">QOF Reporting</div>
<div class="a" style="left:411px;top:185px;width:109px;height:30px;border:4px solid #f5aa0a"></div>
<div class="t" style="left:23px;top:221px;color:#000080">Start Date</div>
<div class="t" style="left:23px;top:246px;color:#000080">No. of Periods</div>
<div class="a sunken " style="left:92px;top:216px;width:78px;height:21px;background:#fff;"></div>
<div class="t" style="left:96px;top:220px;color:#808080">February</div>
<div class="a raised" style="left:152px;top:218px;width:16px;height:17px;"></div>
<svg class="a" style="left:157px;top:225px" width="7" height="4"><path d="M0 0H7V1H6V2H5V3H4V4H3V3H2V2H1V1H0Z" fill="#fff"/></svg>
<svg class="a" style="left:156px;top:224px" width="7" height="4"><path d="M0 0H7V1H6V2H5V3H4V4H3V3H2V2H1V1H0Z" fill="#808080"/></svg>
<div class="a sunken " style="left:176px;top:219px;width:56px;height:19px;background:#fff;"></div>
<div class="t" style="left:180px;top:222px;color:#808080">2021</div>
<div class="a raised" style="left:214px;top:221px;width:16px;height:15px;"></div>
<svg class="a" style="left:219px;top:227px" width="7" height="4"><path d="M0 0H7V1H6V2H5V3H4V4H3V3H2V2H1V1H0Z" fill="#fff"/></svg>
<svg class="a" style="left:218px;top:226px" width="7" height="4"><path d="M0 0H7V1H6V2H5V3H4V4H3V3H2V2H1V1H0Z" fill="#808080"/></svg>
<div class="a sunken " style="left:94px;top:242px;width:78px;height:21px;background:#d4d0c8;"></div>
<div class="t" style="left:97px;top:245px;color:#808080">12</div>
<div class="a raised" style="left:154px;top:244px;width:16px;height:17px;"></div>
<svg class="a" style="left:159px;top:251px" width="7" height="4"><path d="M0 0H7V1H6V2H5V3H4V4H3V3H2V2H1V1H0Z" fill="#fff"/></svg>
<svg class="a" style="left:158px;top:250px" width="7" height="4"><path d="M0 0H7V1H6V2H5V3H4V4H3V3H2V2H1V1H0Z" fill="#808080"/></svg>
<div class="a raised" style="left:236px;top:218px;width:23px;height:23px;"></div>
<svg class="a" style="left:237px;top:224px" width="20" height="11"><rect x="8" y="0" width="6" height="1" fill="#000"/><rect x="6" y="1" width="2" height="1" fill="#000"/><rect x="8" y="1" width="6" height="1" fill="#fff"/><rect x="14" y="1" width="2" height="1" fill="#000"/><rect x="5" y="2" width="1" height="1" fill="#000"/><rect x="6" y="2" width="9" height="1" fill="#fff"/><rect x="15" y="2" width="2" height="1" fill="#000"/><rect x="4" y="3" width="1" height="1" fill="#000"/><rect x="5" y="3" width="9" height="1" fill="#fff"/><rect x="14" y="3" width="2" height="1" fill="#000"/><rect x="16" y="3" width="1" height="1" fill="#808080"/><rect x="17" y="3" width="1" height="1" fill="#000"/><rect x="4" y="4" width="1" height="1" fill="#000"/><rect x="5" y="4" width="8" height="1" fill="#fff"/><rect x="13" y="4" width="2" height="1" fill="#000"/><rect x="15" y="4" width="2" height="1" fill="#808080"/><rect x="17" y="4" width="1" height="1" fill="#000"/><rect x="3" y="5" width="1" height="1" fill="#000"/><rect x="4" y="5" width="8" height="1" fill="#fff"/><rect x="12" y="5" width="2" height="1" fill="#000"/><rect x="14" y="5" width="4" height="1" fill="#808080"/><rect x="18" y="5" width="1" height="1" fill="#000"/><rect x="3" y="6" width="1" height="1" fill="#000"/><rect x="4" y="6" width="5" height="1" fill="#fff"/><rect x="9" y="6" width="4" height="1" fill="#000"/><rect x="13" y="6" width="1" height="1" fill="#fff"/><rect x="14" y="6" width="4" height="1" fill="#808080"/><rect x="18" y="6" width="1" height="1" fill="#000"/><rect x="3" y="7" width="1" height="1" fill="#000"/><rect x="4" y="7" width="4" height="1" fill="#fff"/><rect x="8" y="7" width="1" height="1" fill="#000"/><rect x="9" y="7" width="1" height="1" fill="#fff"/><rect x="10" y="7" width="2" height="1" fill="#000"/><rect x="12" y="7" width="2" height="1" fill="#fff"/><rect x="14" y="7" width="4" height="1" fill="#808080"/><rect x="18" y="7" width="1" height="1" fill="#000"/><rect x="3" y="8" width="1" height="1" fill="#000"/><rect x="4" y="8" width="3" height="1" fill="#fff"/><rect x="7" y="8" width="1" height="1" fill="#000"/><rect x="8" y="8" width="1" height="1" fill="#fff"/><rect x="9" y="8" width="2" height="1" fill="#000"/><rect x="11" y="8" width="2" height="1" fill="#fff"/><rect x="13" y="8" width="1" height="1" fill="#000"/><rect x="14" y="8" width="4" height="1" fill="#808080"/><rect x="18" y="8" width="1" height="1" fill="#000"/><rect x="3" y="9" width="5" height="1" fill="#000"/><rect x="9" y="9" width="2" height="1" fill="#000"/><rect x="13" y="9" width="6" height="1" fill="#000"/><rect x="9" y="10" width="1" height="1" fill="#000"/></svg>
<svg class="a" style="left:263px;top:224px" width="12" height="12"><rect x="4" y="0" width="4" height="1" fill="#808080"/><rect x="2" y="1" width="2" height="1" fill="#808080"/><rect x="4" y="1" width="4" height="1" fill="#404040"/><rect x="8" y="1" width="2" height="1" fill="#808080"/><rect x="1" y="2" width="1" height="1" fill="#808080"/><rect x="2" y="2" width="2" height="1" fill="#404040"/><rect x="4" y="2" width="4" height="1" fill="#fff"/><rect x="8" y="2" width="2" height="1" fill="#404040"/><rect x="10" y="2" width="1" height="1" fill="#fff"/><rect x="1" y="3" width="1" height="1" fill="#808080"/><rect x="2" y="3" width="1" height="1" fill="#404040"/><rect x="3" y="3" width="6" height="1" fill="#fff"/><rect x="9" y="3" width="1" height="1" fill="#d4d0c8"/><rect x="10" y="3" width="1" height="1" fill="#fff"/><rect x="0" y="4" width="1" height="1" fill="#808080"/><rect x="1" y="4" width="1" height="1" fill="#404040"/><rect x="2" y="4" width="3" height="1" fill="#fff"/><rect x="5" y="4" width="2" height="1" fill="#000"/><rect x="7" y="4" width="3" height="1" fill="#fff"/><rect x="10" y="4" width="1" height="1" fill="#d4d0c8"/><rect x="11" y="4" width="1" height="1" fill="#fff"/><rect x="0" y="5" width="1" height="1" fill="#808080"/><rect x="1" y="5" width="1" height="1" fill="#404040"/><rect x="2" y="5" width="2" height="1" fill="#fff"/><rect x="4" y="5" width="4" height="1" fill="#000"/><rect x="8" y="5" width="2" height="1" fill="#fff"/><rect x="10" y="5" width="1" height="1" fill="#d4d0c8"/><rect x="11" y="5" width="1" height="1" fill="#fff"/><rect x="0" y="6" width="1" height="1" fill="#808080"/><rect x="1" y="6" width="1" height="1" fill="#404040"/><rect x="2" y="6" width="2" height="1" fill="#fff"/><rect x="4" y="6" width="4" height="1" fill="#000"/><rect x="8" y="6" width="2" height="1" fill="#fff"/><rect x="10" y="6" width="1" height="1" fill="#d4d0c8"/><rect x="11" y="6" width="1" height="1" fill="#fff"/><rect x="0" y="7" width="1" height="1" fill="#808080"/><rect x="1" y="7" width="1" height="1" fill="#404040"/><rect x="2" y="7" width="3" height="1" fill="#fff"/><rect x="5" y="7" width="2" height="1" fill="#000"/><rect x="7" y="7" width="3" height="1" fill="#fff"/><rect x="10" y="7" width="1" height="1" fill="#d4d0c8"/><rect x="11" y="7" width="1" height="1" fill="#fff"/><rect x="1" y="8" width="1" height="1" fill="#808080"/><rect x="2" y="8" width="1" height="1" fill="#404040"/><rect x="3" y="8" width="6" height="1" fill="#fff"/><rect x="9" y="8" width="1" height="1" fill="#d4d0c8"/><rect x="10" y="8" width="1" height="1" fill="#fff"/><rect x="1" y="9" width="1" height="1" fill="#fff"/><rect x="2" y="9" width="2" height="1" fill="#d4d0c8"/><rect x="4" y="9" width="4" height="1" fill="#fff"/><rect x="8" y="9" width="2" height="1" fill="#d4d0c8"/><rect x="10" y="9" width="1" height="1" fill="#fff"/><rect x="2" y="10" width="2" height="1" fill="#fff"/><rect x="4" y="10" width="4" height="1" fill="#d4d0c8"/><rect x="8" y="10" width="2" height="1" fill="#fff"/><rect x="4" y="11" width="4" height="1" fill="#fff"/></svg>
<div class="t" style="left:280px;top:224px;color:#000080">Registered GP</div>
<svg class="a" style="left:263px;top:243px" width="12" height="12"><rect x="4" y="0" width="4" height="1" fill="#808080"/><rect x="2" y="1" width="2" height="1" fill="#808080"/><rect x="4" y="1" width="4" height="1" fill="#404040"/><rect x="8" y="1" width="2" height="1" fill="#808080"/><rect x="1" y="2" width="1" height="1" fill="#808080"/><rect x="2" y="2" width="2" height="1" fill="#404040"/><rect x="4" y="2" width="4" height="1" fill="#fff"/><rect x="8" y="2" width="2" height="1" fill="#404040"/><rect x="10" y="2" width="1" height="1" fill="#fff"/><rect x="1" y="3" width="1" height="1" fill="#808080"/><rect x="2" y="3" width="1" height="1" fill="#404040"/><rect x="3" y="3" width="6" height="1" fill="#fff"/><rect x="9" y="3" width="1" height="1" fill="#d4d0c8"/><rect x="10" y="3" width="1" height="1" fill="#fff"/><rect x="0" y="4" width="1" height="1" fill="#808080"/><rect x="1" y="4" width="1" height="1" fill="#404040"/><rect x="2" y="4" width="8" height="1" fill="#fff"/><rect x="10" y="4" width="1" height="1" fill="#d4d0c8"/><rect x="11" y="4" width="1" height="1" fill="#fff"/><rect x="0" y="5" width="1" height="1" fill="#808080"/><rect x="1" y="5" width="1" height="1" fill="#404040"/><rect x="2" y="5" width="8" height="1" fill="#fff"/><rect x="10" y="5" width="1" height="1" fill="#d4d0c8"/><rect x="11" y="5" width="1" height="1" fill="#fff"/><rect x="0" y="6" width="1" height="1" fill="#808080"/><rect x="1" y="6" width="1" height="1" fill="#404040"/><rect x="2" y="6" width="8" height="1" fill="#fff"/><rect x="10" y="6" width="1" height="1" fill="#d4d0c8"/><rect x="11" y="6" width="1" height="1" fill="#fff"/><rect x="0" y="7" width="1" height="1" fill="#808080"/><rect x="1" y="7" width="1" height="1" fill="#404040"/><rect x="2" y="7" width="8" height="1" fill="#fff"/><rect x="10" y="7" width="1" height="1" fill="#d4d0c8"/><rect x="11" y="7" width="1" height="1" fill="#fff"/><rect x="1" y="8" width="1" height="1" fill="#808080"/><rect x="2" y="8" width="1" height="1" fill="#404040"/><rect x="3" y="8" width="6" height="1" fill="#fff"/><rect x="9" y="8" width="1" height="1" fill="#d4d0c8"/><rect x="10" y="8" width="1" height="1" fill="#fff"/><rect x="1" y="9" width="1" height="1" fill="#fff"/><rect x="2" y="9" width="2" height="1" fill="#d4d0c8"/><rect x="4" y="9" width="4" height="1" fill="#fff"/><rect x="8" y="9" width="2" height="1" fill="#d4d0c8"/><rect x="10" y="9" width="1" height="1" fill="#fff"/><rect x="2" y="10" width="2" height="1" fill="#fff"/><rect x="4" y="10" width="4" height="1" fill="#d4d0c8"/><rect x="8" y="10" width="2" height="1" fill="#fff"/><rect x="4" y="11" width="4" height="1" fill="#fff"/></svg>
<div class="t" style="left:280px;top:243px;color:#000080">Branch</div>
<svg class="a" style="left:372px;top:224px" width="12" height="12"><rect x="4" y="0" width="4" height="1" fill="#808080"/><rect x="2" y="1" width="2" height="1" fill="#808080"/><rect x="4" y="1" width="4" height="1" fill="#404040"/><rect x="8" y="1" width="2" height="1" fill="#808080"/><rect x="1" y="2" width="1" height="1" fill="#808080"/><rect x="2" y="2" width="2" height="1" fill="#404040"/><rect x="4" y="2" width="4" height="1" fill="#fff"/><rect x="8" y="2" width="2" height="1" fill="#404040"/><rect x="10" y="2" width="1" height="1" fill="#fff"/><rect x="1" y="3" width="1" height="1" fill="#808080"/><rect x="2" y="3" width="1" height="1" fill="#404040"/><rect x="3" y="3" width="6" height="1" fill="#fff"/><rect x="9" y="3" width="1" height="1" fill="#d4d0c8"/><rect x="10" y="3" width="1" height="1" fill="#fff"/><rect x="0" y="4" width="1" height="1" fill="#808080"/><rect x="1" y="4" width="1" height="1" fill="#404040"/><rect x="2" y="4" width="8" height="1" fill="#fff"/><rect x="10" y="4" width="1" height="1" fill="#d4d0c8"/><rect x="11" y="4" width="1" height="1" fill="#fff"/><rect x="0" y="5" width="1" height="1" fill="#808080"/><rect x="1" y="5" width="1" height="1" fill="#404040"/><rect x="2" y="5" width="8" height="1" fill="#fff"/><rect x="10" y="5" width="1" height="1" fill="#d4d0c8"/><rect x="11" y="5" width="1" height="1" fill="#fff"/><rect x="0" y="6" width="1" height="1" fill="#808080"/><rect x="1" y="6" width="1" height="1" fill="#404040"/><rect x="2" y="6" width="8" height="1" fill="#fff"/><rect x="10" y="6" width="1" height="1" fill="#d4d0c8"/><rect x="11" y="6" width="1" height="1" fill="#fff"/><rect x="0" y="7" width="1" height="1" fill="#808080"/><rect x="1" y="7" width="1" height="1" fill="#404040"/><rect x="2" y="7" width="8" height="1" fill="#fff"/><rect x="10" y="7" width="1" height="1" fill="#d4d0c8"/><rect x="11" y="7" width="1" height="1" fill="#fff"/><rect x="1" y="8" width="1" height="1" fill="#808080"/><rect x="2" y="8" width="1" height="1" fill="#404040"/><rect x="3" y="8" width="6" height="1" fill="#fff"/><rect x="9" y="8" width="1" height="1" fill="#d4d0c8"/><rect x="10" y="8" width="1" height="1" fill="#fff"/><rect x="1" y="9" width="1" height="1" fill="#fff"/><rect x="2" y="9" width="2" height="1" fill="#d4d0c8"/><rect x="4" y="9" width="4" height="1" fill="#fff"/><rect x="8" y="9" width="2" height="1" fill="#d4d0c8"/><rect x="10" y="9" width="1" height="1" fill="#fff"/><rect x="2" y="10" width="2" height="1" fill="#fff"/><rect x="4" y="10" width="4" height="1" fill="#d4d0c8"/><rect x="8" y="10" width="2" height="1" fill="#fff"/><rect x="4" y="11" width="4" height="1" fill="#fff"/></svg>
<div class="t" style="left:389px;top:224px;color:#000080">Usual GP</div>
<svg class="a" style="left:458px;top:223px" width="12" height="12"><rect x="4" y="0" width="4" height="1" fill="#808080"/><rect x="2" y="1" width="2" height="1" fill="#808080"/><rect x="4" y="1" width="4" height="1" fill="#404040"/><rect x="8" y="1" width="2" height="1" fill="#808080"/><rect x="1" y="2" width="1" height="1" fill="#808080"/><rect x="2" y="2" width="2" height="1" fill="#404040"/><rect x="4" y="2" width="4" height="1" fill="#fff"/><rect x="8" y="2" width="2" height="1" fill="#404040"/><rect x="10" y="2" width="1" height="1" fill="#fff"/><rect x="1" y="3" width="1" height="1" fill="#808080"/><rect x="2" y="3" width="1" height="1" fill="#404040"/><rect x="3" y="3" width="6" height="1" fill="#fff"/><rect x="9" y="3" width="1" height="1" fill="#d4d0c8"/><rect x="10" y="3" width="1" height="1" fill="#fff"/><rect x="0" y="4" width="1" height="1" fill="#808080"/><rect x="1" y="4" width="1" height="1" fill="#404040"/><rect x="2" y="4" width="8" height="1" fill="#fff"/><rect x="10" y="4" width="1" height="1" fill="#d4d0c8"/><rect x="11" y="4" width="1" height="1" fill="#fff"/><rect x="0" y="5" width="1" height="1" fill="#808080"/><rect x="1" y="5" width="1" height="1" fill="#404040"/><rect x="2" y="5" width="8" height="1" fill="#fff"/><rect x="10" y="5" width="1" height="1" fill="#d4d0c8"/><rect x="11" y="5" width="1" height="1" fill="#fff"/><rect x="0" y="6" width="1" height="1" fill="#808080"/><rect x="1" y="6" width="1" height="1" fill="#404040"/><rect x="2" y="6" width="8" height="1" fill="#fff"/><rect x="10" y="6" width="1" height="1" fill="#d4d0c8"/><rect x="11" y="6" width="1" height="1" fill="#fff"/><rect x="0" y="7" width="1" height="1" fill="#808080"/><rect x="1" y="7" width="1" height="1" fill="#404040"/><rect x="2" y="7" width="8" height="1" fill="#fff"/><rect x="10" y="7" width="1" height="1" fill="#d4d0c8"/><rect x="11" y="7" width="1" height="1" fill="#fff"/><rect x="1" y="8" width="1" height="1" fill="#808080"/><rect x="2" y="8" width="1" height="1" fill="#404040"/><rect x="3" y="8" width="6" height="1" fill="#fff"/><rect x="9" y="8" width="1" height="1" fill="#d4d0c8"/><rect x="10" y="8" width="1" height="1" fill="#fff"/><rect x="1" y="9" width="1" height="1" fill="#fff"/><rect x="2" y="9" width="2" height="1" fill="#d4d0c8"/><rect x="4" y="9" width="4" height="1" fill="#fff"/><rect x="8" y="9" width="2" height="1" fill="#d4d0c8"/><rect x="10" y="9" width="1" height="1" fill="#fff"/><rect x="2" y="10" width="2" height="1" fill="#fff"/><rect x="4" y="10" width="4" height="1" fill="#d4d0c8"/><rect x="8" y="10" width="2" height="1" fill="#fff"/><rect x="4" y="11" width="4" height="1" fill="#fff"/></svg>
<div class="a sunken " style="left:176px;top:247px;width:13px;height:13px;background:#fff;"></div>
<svg class="a" style="left:179px;top:250px" width="7" height="7"><path d="M6 0v3l-4 4l-2-2v-3l2 2z" fill="#000"/></svg>
<div class="t" style="left:194px;top:247px;color:#000080">Use Defaults</div>
<div class="a sunken " style="left:457px;top:247px;width:13px;height:13px;background:#fff;"></div>
<div class="t" style="left:475px;top:247px;color:#000080">Show Inactive GPs</div>
<div class="a" style="left:475px;top:221px;width:76px;height:23px;border:1px solid #000"></div>
<div class="a raised" style="left:476px;top:222px;width:74px;height:21px;"></div>
<div class="t" style="left:482px;top:225px;">Patient Set...</div>
<div class="a sunken sk" style="left:20px;top:272px;width:1079px;height:186px;background:#84818a;"></div>
<div class="a" style="left:22px;top:274px;width:1058px;height:182px;overflow:hidden">
<div class="a" style="left:0px;top:0px;width:149px;height:17px;background:#d4d0c8;border-right:1px solid #000;border-bottom:1px solid #000;box-shadow:inset 1px 1px #fff"></div>
<div class="a" style="left:149px;top:0px;width:63px;height:17px;background:#d4d0c8;border-right:1px solid #000;border-bottom:1px solid #000;box-shadow:inset 1px 1px #fff"></div>
<div class="t" style="left:152px;top:2px">Feb 21</div>
<div class="a" style="left:212px;top:0px;width:63px;height:17px;background:#d4d0c8;border-right:1px solid #000;border-bottom:1px solid #000;box-shadow:inset 1px 1px #fff"></div>
<div class="t" style="left:215px;top:2px">Mar 21</div>
<div class="a" style="left:275px;top:0px;width:63px;height:17px;background:#d4d0c8;border-right:1px solid #000;border-bottom:1px solid #000;box-shadow:inset 1px 1px #fff"></div>
<div class="t" style="left:278px;top:2px">Apr 21</div>
<div class="a" style="left:338px;top:0px;width:63px;height:17px;background:#d4d0c8;border-right:1px solid #000;border-bottom:1px solid #000;box-shadow:inset 1px 1px #fff"></div>
<div class="t" style="left:341px;top:2px">May 21</div>
<div class="a" style="left:401px;top:0px;width:63px;height:17px;background:#d4d0c8;border-right:1px solid #000;border-bottom:1px solid #000;box-shadow:inset 1px 1px #fff"></div>
<div class="t" style="left:404px;top:2px">Jun 21</div>
<div class="a" style="left:464px;top:0px;width:63px;height:17px;background:#d4d0c8;border-right:1px solid #000;border-bottom:1px solid #000;box-shadow:inset 1px 1px #fff"></div>
<div class="t" style="left:467px;top:2px">Jul 21</div>
<div class="a" style="left:527px;top:0px;width:63px;height:17px;background:#d4d0c8;border-right:1px solid #000;border-bottom:1px solid #000;box-shadow:inset 1px 1px #fff"></div>
<div class="t" style="left:530px;top:2px">Aug 21</div>
<div class="a" style="left:590px;top:0px;width:63px;height:17px;background:#d4d0c8;border-right:1px solid #000;border-bottom:1px solid #000;box-shadow:inset 1px 1px #fff"></div>
<div class="t" style="left:593px;top:2px">Sep 21</div>
<div class="a" style="left:653px;top:0px;width:63px;height:17px;background:#d4d0c8;border-right:1px solid #000;border-bottom:1px solid #000;box-shadow:inset 1px 1px #fff"></div>
<div class="t" style="left:656px;top:2px">Oct 21</div>
<div class="a" style="left:716px;top:0px;width:63px;height:17px;background:#d4d0c8;border-right:1px solid #000;border-bottom:1px solid #000;box-shadow:inset 1px 1px #fff"></div>
<div class="t" style="left:719px;top:2px">Nov 21</div>
<div class="a" style="left:779px;top:0px;width:63px;height:17px;background:#d4d0c8;border-right:1px solid #000;border-bottom:1px solid #000;box-shadow:inset 1px 1px #fff"></div>
<div class="t" style="left:782px;top:2px">Dec 21</div>
<div class="a" style="left:842px;top:0px;width:63px;height:17px;background:#d4d0c8;border-right:1px solid #000;border-bottom:1px solid #000;box-shadow:inset 1px 1px #fff"></div>
<div class="t" style="left:845px;top:2px">Jan 22</div>
<div class="a" style="left:149px;top:17px;width:756px;height:169px;background:#fff"></div>
<div class="a" style="left:211px;top:17px;width:1px;height:200px;background:#c0c0c0"></div>
<div class="a" style="left:274px;top:17px;width:1px;height:200px;background:#c0c0c0"></div>
<div class="a" style="left:337px;top:17px;width:1px;height:200px;background:#c0c0c0"></div>
<div class="a" style="left:400px;top:17px;width:1px;height:200px;background:#c0c0c0"></div>
<div class="a" style="left:463px;top:17px;width:1px;height:200px;background:#c0c0c0"></div>
<div class="a" style="left:526px;top:17px;width:1px;height:200px;background:#c0c0c0"></div>
<div class="a" style="left:589px;top:17px;width:1px;height:200px;background:#c0c0c0"></div>
<div class="a" style="left:652px;top:17px;width:1px;height:200px;background:#c0c0c0"></div>
<div class="a" style="left:715px;top:17px;width:1px;height:200px;background:#c0c0c0"></div>
<div class="a" style="left:778px;top:17px;width:1px;height:200px;background:#c0c0c0"></div>
<div class="a" style="left:841px;top:17px;width:1px;height:200px;background:#c0c0c0"></div>
<div class="a" style="left:904px;top:17px;width:1px;height:200px;background:#c0c0c0"></div>
<div class="a" style="left:149px;top:32px;width:756px;height:1px;background:#c0c0c0"></div>
<div class="a" style="left:149px;top:48px;width:756px;height:1px;background:#c0c0c0"></div>
<div class="a" style="left:149px;top:64px;width:756px;height:1px;background:#c0c0c0"></div>
<div class="a" style="left:149px;top:80px;width:756px;height:1px;background:#c0c0c0"></div>
<div class="a" style="left:149px;top:96px;width:756px;height:1px;background:#c0c0c0"></div>
<div class="a" style="left:149px;top:112px;width:756px;height:1px;background:#c0c0c0"></div>
<div class="a" style="left:149px;top:128px;width:756px;height:1px;background:#c0c0c0"></div>
<div class="a" style="left:149px;top:144px;width:756px;height:1px;background:#c0c0c0"></div>
<div class="a" style="left:149px;top:160px;width:756px;height:1px;background:#c0c0c0"></div>
<div class="a" style="left:149px;top:176px;width:756px;height:1px;background:#c0c0c0"></div>
<div class="a" style="left:149px;top:192px;width:756px;height:1px;background:#c0c0c0"></div>
<div class="a" style="left:904px;top:17px;width:1px;height:200px;background:#000"></div>
<div class="a" style="left:0px;top:17px;width:149px;height:16px;background:#d4d0c8;border-right:1px solid #000;border-bottom:1px solid #000;box-shadow:inset 1px 1px #fff"></div>
<div class="t" style="left:4px;top:18px">Bennett, John</div>
<div class="t r" style="right:849px;top:18px">1</div>
<div class="t r" style="right:786px;top:18px">1</div>
<div class="t r" style="right:723px;top:18px">1</div>
<div class="t r" style="right:660px;top:18px">1</div>
<div class="t r" style="right:597px;top:18px">1</div>
<div class="t r" style="right:534px;top:18px">1</div>
<div class="t r" style="right:471px;top:18px">1</div>
<div class="t r" style="right:408px;top:18px">1</div>
<div class="t r" style="right:345px;top:18px">1</div>
<div class="t r" style="right:282px;top:18px">1</div>
<div class="t r" style="right:219px;top:18px">1</div>
<div class="t r" style="right:156px;top:18px">1</div>
<div class="a" style="left:0px;top:33px;width:149px;height:16px;background:#d4d0c8;border-right:1px solid #000;border-bottom:1px solid #000;box-shadow:inset 1px 1px #fff"></div>
<div class="t" style="left:4px;top:34px">Bennett, Louise</div>
<div class="t r" style="right:849px;top:34px">0</div>
<div class="t r" style="right:786px;top:34px">0</div>
<div class="t r" style="right:723px;top:34px">0</div>
<div class="t r" style="right:660px;top:34px">0</div>
<div class="t r" style="right:597px;top:34px">0</div>
<div class="t r" style="right:534px;top:34px">0</div>
<div class="t r" style="right:471px;top:34px">0</div>
<div class="t r" style="right:408px;top:34px">0</div>
<div class="t r" style="right:345px;top:34px">0</div>
<div class="t r" style="right:282px;top:34px">0</div>
<div class="t r" style="right:219px;top:34px">0</div>
<div class="t r" style="right:156px;top:34px">0</div>
<div class="a" style="left:0px;top:49px;width:149px;height:16px;background:#d4d0c8;border-right:1px solid #000;border-bottom:1px solid #000;box-shadow:inset 1px 1px #fff"></div>
<div class="t" style="left:4px;top:50px">Boxall-Rayner, Elsie</div>
<div class="t r" style="right:849px;top:50px">0</div>
<div class="t r" style="right:786px;top:50px">0</div>
<div class="t r" style="right:723px;top:50px">0</div>
<div class="t r" style="right:660px;top:50px">0</div>
<div class="t r" style="right:597px;top:50px">0</div>
<div class="t r" style="right:534px;top:50px">0</div>
<div class="t r" style="right:471px;top:50px">0</div>
<div class="t r" style="right:408px;top:50px">0</div>
<div class="t r" style="right:345px;top:50px">0</div>
<div class="t r" style="right:282px;top:50px">0</div>
<div class="t r" style="right:219px;top:50px">0</div>
<div class="t r" style="right:156px;top:50px">0</div>
<div class="a" style="left:0px;top:65px;width:149px;height:16px;background:#d4d0c8;border-right:1px solid #000;border-bottom:1px solid #000;box-shadow:inset 1px 1px #fff"></div>
<div class="t" style="left:4px;top:66px">Earth, Mel</div>
<div class="t r" style="right:849px;top:66px">3</div>
<div class="t r" style="right:786px;top:66px">3</div>
<div class="t r" style="right:723px;top:66px">4</div>
<div class="t r" style="right:660px;top:66px">4</div>
<div class="t r" style="right:597px;top:66px">4</div>
<div class="t r" style="right:534px;top:66px">6</div>
<div class="t r" style="right:471px;top:66px">6</div>
<div class="t r" style="right:408px;top:66px">6</div>
<div class="t r" style="right:345px;top:66px">6</div>
<div class="t r" style="right:282px;top:66px">5</div>
<div class="t r" style="right:219px;top:66px">5</div>
<div class="t r" style="right:156px;top:66px">5</div>
<div class="a" style="left:0px;top:81px;width:149px;height:16px;background:#d4d0c8;border-right:1px solid #000;border-bottom:1px solid #000;box-shadow:inset 1px 1px #fff"></div>
<div class="t" style="left:4px;top:82px">Holden, Jim</div>
<div class="t r" style="right:849px;top:82px">0</div>
<div class="t r" style="right:786px;top:82px">0</div>
<div class="t r" style="right:723px;top:82px">0</div>
<div class="t r" style="right:660px;top:82px">0</div>
<div class="t r" style="right:597px;top:82px">0</div>
<div class="t r" style="right:534px;top:82px">0</div>
<div class="t r" style="right:471px;top:82px">0</div>
<div class="t r" style="right:408px;top:82px">0</div>
<div class="t r" style="right:345px;top:82px">0</div>
<div class="t r" style="right:282px;top:82px">0</div>
<div class="t r" style="right:219px;top:82px">0</div>
<div class="t r" style="right:156px;top:82px">0</div>
<div class="a" style="left:0px;top:97px;width:149px;height:16px;background:#d4d0c8;border-right:1px solid #000;border-bottom:1px solid #000;box-shadow:inset 1px 1px #fff"></div>
<div class="t" style="left:4px;top:98px">Jones, Susan</div>
<div class="t r" style="right:849px;top:98px">0</div>
<div class="t r" style="right:786px;top:98px">0</div>
<div class="t r" style="right:723px;top:98px">0</div>
<div class="t r" style="right:660px;top:98px">0</div>
<div class="t r" style="right:597px;top:98px">0</div>
<div class="t r" style="right:534px;top:98px">0</div>
<div class="t r" style="right:471px;top:98px">0</div>
<div class="t r" style="right:408px;top:98px">0</div>
<div class="t r" style="right:345px;top:98px">0</div>
<div class="t r" style="right:282px;top:98px">0</div>
<div class="t r" style="right:219px;top:98px">0</div>
<div class="t r" style="right:156px;top:98px">0</div>
<div class="a" style="left:0px;top:113px;width:149px;height:16px;background:#d4d0c8;border-right:1px solid #000;border-bottom:1px solid #000;box-shadow:inset 1px 1px #fff"></div>
<div class="t" style="left:4px;top:114px">Jupiter, Sarah</div>
<div class="t r" style="right:849px;top:114px">26</div>
<div class="t r" style="right:786px;top:114px">29</div>
<div class="t r" style="right:723px;top:114px">29</div>
<div class="t r" style="right:660px;top:114px">31</div>
<div class="t r" style="right:597px;top:114px">34</div>
<div class="t r" style="right:534px;top:114px">34</div>
<div class="t r" style="right:471px;top:114px">39</div>
<div class="t r" style="right:408px;top:114px">46</div>
<div class="t r" style="right:345px;top:114px">42</div>
<div class="t r" style="right:282px;top:114px">40</div>
<div class="t r" style="right:219px;top:114px">43</div>
<div class="t r" style="right:156px;top:114px">42</div>
<div class="a" style="left:0px;top:129px;width:149px;height:16px;background:#d4d0c8;border-right:1px solid #000;border-bottom:1px solid #000;box-shadow:inset 1px 1px #fff"></div>
<div class="t" style="left:4px;top:130px">Mars, Jane</div>
<div class="t r" style="right:849px;top:130px">0</div>
<div class="t r" style="right:786px;top:130px">0</div>
<div class="t r" style="right:723px;top:130px">0</div>
<div class="t r" style="right:660px;top:130px">0</div>
<div class="t r" style="right:597px;top:130px">0</div>
<div class="t r" style="right:534px;top:130px">0</div>
<div class="t r" style="right:471px;top:130px">0</div>
<div class="t r" style="right:408px;top:130px">0</div>
<div class="t r" style="right:345px;top:130px">0</div>
<div class="t r" style="right:282px;top:130px">0</div>
<div class="t r" style="right:219px;top:130px">0</div>
<div class="t r" style="right:156px;top:130px">0</div>
<div class="a" style="left:0px;top:145px;width:149px;height:16px;background:#d4d0c8;border-right:1px solid #000;border-bottom:1px solid #000;box-shadow:inset 1px 1px #fff"></div>
<div class="t" style="left:4px;top:146px">Mullan, Kevin</div>
<div class="t r" style="right:849px;top:146px">2</div>
<div class="t r" style="right:786px;top:146px">3</div>
<div class="t r" style="right:723px;top:146px">3</div>
<div class="t r" style="right:660px;top:146px">3</div>
<div class="t r" style="right:597px;top:146px">3</div>
<div class="t r" style="right:534px;top:146px">3</div>
<div class="t r" style="right:471px;top:146px">3</div>
<div class="t r" style="right:408px;top:146px">5</div>
<div class="t r" style="right:345px;top:146px">4</div>
<div class="t r" style="right:282px;top:146px">5</div>
<div class="t r" style="right:219px;top:146px">5</div>
<div class="t r" style="right:156px;top:146px">5</div>
<div class="a" style="left:0px;top:161px;width:149px;height:16px;background:#d4d0c8;border-right:1px solid #000;border-bottom:1px solid #000;box-shadow:inset 1px 1px #fff"></div>
<div class="t" style="left:4px;top:162px">Neptunes, Michael</div>
<div class="t r" style="right:849px;top:162px">1</div>
<div class="t r" style="right:786px;top:162px">2</div>
<div class="t r" style="right:723px;top:162px">2</div>
<div class="t r" style="right:660px;top:162px">2</div>
<div class="t r" style="right:597px;top:162px">2</div>
<div class="t r" style="right:534px;top:162px">2</div>
<div class="t r" style="right:471px;top:162px">2</div>
<div class="t r" style="right:408px;top:162px">2</div>
<div class="t r" style="right:345px;top:162px">2</div>
<div class="t r" style="right:282px;top:162px">2</div>
<div class="t r" style="right:219px;top:162px">2</div>
<div class="t r" style="right:156px;top:162px">2</div>
<div class="a" style="left:0px;top:177px;width:149px;height:16px;background:#d4d0c8;border-right:1px solid #000;border-bottom:1px solid #000;box-shadow:inset 1px 1px #fff"></div>
<div class="t" style="left:4px;top:178px">Saturn, Tim</div>
<div class="t r" style="right:849px;top:178px">5</div>
<div class="t r" style="right:786px;top:178px">5</div>
<div class="t r" style="right:723px;top:178px">5</div>
<div class="t r" style="right:660px;top:178px">5</div>
<div class="t r" style="right:597px;top:178px">5</div>
<div class="t r" style="right:534px;top:178px">5</div>
<div class="t r" style="right:471px;top:178px">5</div>
<div class="t r" style="right:408px;top:178px">5</div>
<div class="t r" style="right:345px;top:178px">5</div>
<div class="t r" style="right:282px;top:178px">5</div>
<div class="t r" style="right:219px;top:178px">5</div>
<div class="t r" style="right:156px;top:178px">5</div>
</div>
<div class="a" style="left:1080px;top:274px;width:16px;height:182px;background:repeating-conic-gradient(#d4d0c8 0 25%,#fff 0 50%) 0 0/2px 2px"></div>
<div class="a raised" style="left:1080px;top:274px;width:16px;height:16px;"></div>
<svg class="a" style="left:1084px;top:280px" width="7" height="4"><path d="M3 0H4V1H5V2H6V3H7V4H0V3H1V2H2V1H3Z" fill="#000"/></svg>
<div class="a raised" style="left:1080px;top:440px;width:16px;height:16px;"></div>
<svg class="a" style="left:1084px;top:445px" width="7" height="4"><path d="M0 0H7V1H6V2H5V3H4V4H3V3H2V2H1V1H0Z" fill="#000"/></svg>
<div class="a raised" style="left:1080px;top:290px;width:16px;height:16px;"></div>
<div class="a sunken sk" style="left:20px;top:466px;width:1079px;height:141px;background:#d4d0c8;"></div>
<div class="a" style="left:22px;top:469px;width:1075px;height:1px;background:#000"></div>
<div class="a" style="left:22px;top:470px;width:1075px;height:1px;background:#fff"></div>
<div class="a" style="left:22px;top:471px;width:1075px;height:1px;background:#fff"></div>
<div class="a" style="left:22px;top:475px;width:288px;height:130px;border:1px solid;border-color:#808080 #fff #fff #808080;box-shadow:inset 1px 1px #000,inset -1px -1px #d4d0c8;background:#fff"></div>
<div class="a" style="left:24px;top:477px;width:268px;height:112px;overflow:hidden">
<div class="t" style="left:1px;top:1px;color:#000">Alan</div>
<div class="t" style="left:90px;top:1px;color:#000">Abbott</div>
<div class="t" style="left:180px;top:1px;color:#000">01/07/1949</div>
<div class="t" style="left:252px;top:1px;color:#000">4217</div>
<div class="a" style="left:0;top:16px;width:268px;height:16px;background:#0a246a;outline:1px dotted #f5d000;outline-offset:-1px"></div>
<div class="t" style="left:1px;top:17px;color:#fff">Alan</div>
<div class="t" style="left:90px;top:17px;color:#fff">Abbott</div>
<div class="t" style="left:180px;top:17px;color:#fff">07/10/1988</div>
<div class="t" style="left:252px;top:17px;color:#fff">4217</div>
<div class="t" style="left:0px;top:33px;color:#000">June</div>
<div class="t" style="left:252px;top:33px;color:#000">4217</div>
<div class="t" style="left:0px;top:49px;color:#000">Zoe</div>
<div class="t" style="left:252px;top:49px;color:#000">4217</div>
<div class="t" style="left:0px;top:65px;color:#000">Zog</div>
<div class="t" style="left:252px;top:65px;color:#000">4217</div>
<div class="t" style="left:0px;top:81px;color:#000">Zamir</div>
<div class="t" style="left:252px;top:81px;color:#000">4217</div>
<div class="t" style="left:0px;top:97px;color:#000">Zafar</div>
<div class="t" style="left:252px;top:97px;color:#000">4217</div>
</div>
<div class="a" style="left:292px;top:477px;width:16px;height:112px;background:repeating-conic-gradient(#d4d0c8 0 25%,#fff 0 50%) 0 0/2px 2px"></div>
<div class="a raised" style="left:292px;top:477px;width:16px;height:16px;"></div>
<svg class="a" style="left:296px;top:483px" width="7" height="4"><path d="M3 0H4V1H5V2H6V3H7V4H0V3H1V2H2V1H3Z" fill="#000"/></svg>
<div class="a raised" style="left:292px;top:573px;width:16px;height:16px;"></div>
<svg class="a" style="left:296px;top:578px" width="7" height="4"><path d="M0 0H7V1H6V2H5V3H4V4H3V3H2V2H1V1H0Z" fill="#000"/></svg>
<div class="a raised" style="left:292px;top:493px;width:16px;height:16px;"></div>
<div class="a" style="left:24px;top:589px;width:268px;height:16px;background:repeating-conic-gradient(#d4d0c8 0 25%,#fff 0 50%) 0 0/2px 2px"></div>
<div class="a raised" style="left:24px;top:589px;width:16px;height:16px;"></div>
<svg class="a" style="left:30px;top:593px" width="4" height="7"><path d="M3 0H4V7H3V6H2V5H1V4H0V3H1V2H2V1H3Z" fill="#000"/></svg>
<div class="a raised" style="left:276px;top:589px;width:16px;height:16px;"></div>
<svg class="a" style="left:281px;top:593px" width="4" height="7"><path d="M0 0H1V1H2V2H3V3H4V4H3V5H2V6H1V7H0Z" fill="#000"/></svg>
<div class="a raised" style="left:40px;top:589px;width:16px;height:16px;"></div>
<div class="a" style="left:292px;top:589px;width:16px;height:14px;background:#fff;border-left:1px solid #404040;border-top:1px solid #404040"></div>
<div class="a" style="left:22px;top:603px;width:287px;height:1px;background:#d4d0c8"></div>
<div class="a" style="left:22px;top:604px;width:288px;height:1px;background:#fff"></div>
<div class="a" style="left:313px;top:475px;width:784px;height:130px;border:1px solid;border-color:#808080 #fff #fff #808080;box-shadow:inset 1px 1px #000,inset -1px -1px #d4d0c8;background:#fff"></div>
<div class="t" style="left:316px;top:478px;">09/06/2021</div>
<div class="t" style="left:387px;top:478px;">Surgery consultation</div>
<div class="t" style="left:554px;top:478px;">Dr Fiona Venus</div>
<div class="t" style="left:316px;top:494px;">09/06/2021</div>
<div class="t" style="left:387px;top:494px;">Surgery consultation</div>
<div class="t" style="left:554px;top:494px;">Dr Fiona Venus</div>
<div class="t" style="left:316px;top:510px;">09/09/2021</div>
<div class="t" style="left:387px;top:510px;">Surgery consultation</div>
<div class="t" style="left:554px;top:510px;">Dr Jim Holden</div>
<div class="t" style="left:316px;top:526px;">04/10/2021</div>
<div class="t" style="left:387px;top:526px;">Surgery consultation</div>
<div class="t" style="left:554px;top:526px;">Dr Jim Holden</div>
<div class="t" style="left:316px;top:542px;">13/10/2021</div>
<div class="t" style="left:387px;top:542px;">Surgery consultation</div>
<div class="t" style="left:554px;top:542px;">Dr Jim Holden</div>
<div class="s" style="left:7px;top:625px;">Ready</div>
<svg class="a" style="left:1100px;top:626px" width="12" height="12"><path d="M11 0L0 11M11 4L4 11M11 8L8 11" stroke="#808080" stroke-width="1"/><path d="M11 1L1 11M11 5L5 11M11 9L9 11" stroke="#fff" stroke-width="1"/></svg>
<div class="a" style="left:90px;top:501px;width:186px;height:160px;background:#d4d0c8;border:1px solid;border-color:#d4d0c8 #404040 #404040 #d4d0c8;box-shadow:inset 1px 1px #fff,inset -1px -1px #808080"></div>
<div class="s" style="left:110px;top:507px;">No Sort</div>
<div class="s" style="left:110px;top:524px;">Sort Patients by Surname</div>
<div class="s" style="left:110px;top:541px;">Sort Patients by Date of Birth</div>
<div class="a" style="left:95px;top:559px;width:178px;height:1px;background:#808080"></div>
<div class="a" style="left:95px;top:560px;width:178px;height:1px;background:#fff"></div>
<div class="s" style="left:110px;top:567px;">Reverse Sort</div>
<div class="a" style="left:95px;top:585px;width:178px;height:1px;background:#808080"></div>
<div class="a" style="left:95px;top:586px;width:178px;height:1px;background:#fff"></div>
<div class="s" style="left:110px;top:593px;">Print This Group...</div>
<div class="s" style="left:110px;top:610px;">Save This Group...</div>
<div class="s" style="left:110px;top:627px;">Copy</div>
<div class="s" style="left:110px;top:644px;">Open Consultation Mgr...</div>
<svg class="a" style="left:98px;top:528px" width="7" height="7"><rect x="6" y="0" width="1" height="1" fill="#000"/><rect x="5" y="1" width="2" height="1" fill="#000"/><rect x="0" y="2" width="1" height="1" fill="#000"/><rect x="4" y="2" width="3" height="1" fill="#000"/><rect x="0" y="3" width="2" height="1" fill="#000"/><rect x="3" y="3" width="3" height="1" fill="#000"/><rect x="0" y="4" width="5" height="1" fill="#000"/><rect x="1" y="5" width="3" height="1" fill="#000"/><rect x="2" y="6" width="1" height="1" fill="#000"/></svg>
<div class="a" style="left:87px;top:498px;width:193px;height:165px;border:4px solid #f5aa0a"></div>
<div class="a" style="left:675px;top:495px;width:194px;height:90px;border:4px solid #000;background:#fff"></div>
<div class="a" style="left:679px;top:508px;width:186px;font:20px/21.5px 'Liberation Sans',sans-serif;color:#333;text-align:center;white-space:pre"><span style="letter-spacing:0.6px">Select a patient to</span>
<span style="letter-spacing:0.4px">view the clinical</span>
<span style="letter-spacing:0.5px">information</span></div>
<svg class="a" style="left:627px;top:534px" width="48" height="13"><rect x="11" y="4" width="37" height="4" fill="#000"/><path d="M0 6L12 0V12Z" fill="#000"/></svg>
<div class="a" style="left:316px;top:619px;width:189px;height:40px;border:4px solid #000;background:#fff"></div>
<div class="a" style="left:320px;top:628px;width:181px;font:20px/22px 'Liberation Sans',sans-serif;letter-spacing:0.35px;color:#333;text-align:center;white-space:pre">Right click menu</div>
<svg class="a" style="left:281px;top:633px" width="35" height="13"><rect x="10" y="4" width="25" height="4" fill="#000"/><path d="M0 6L11 0V12Z" fill="#000"/></svg>
</body></html>
